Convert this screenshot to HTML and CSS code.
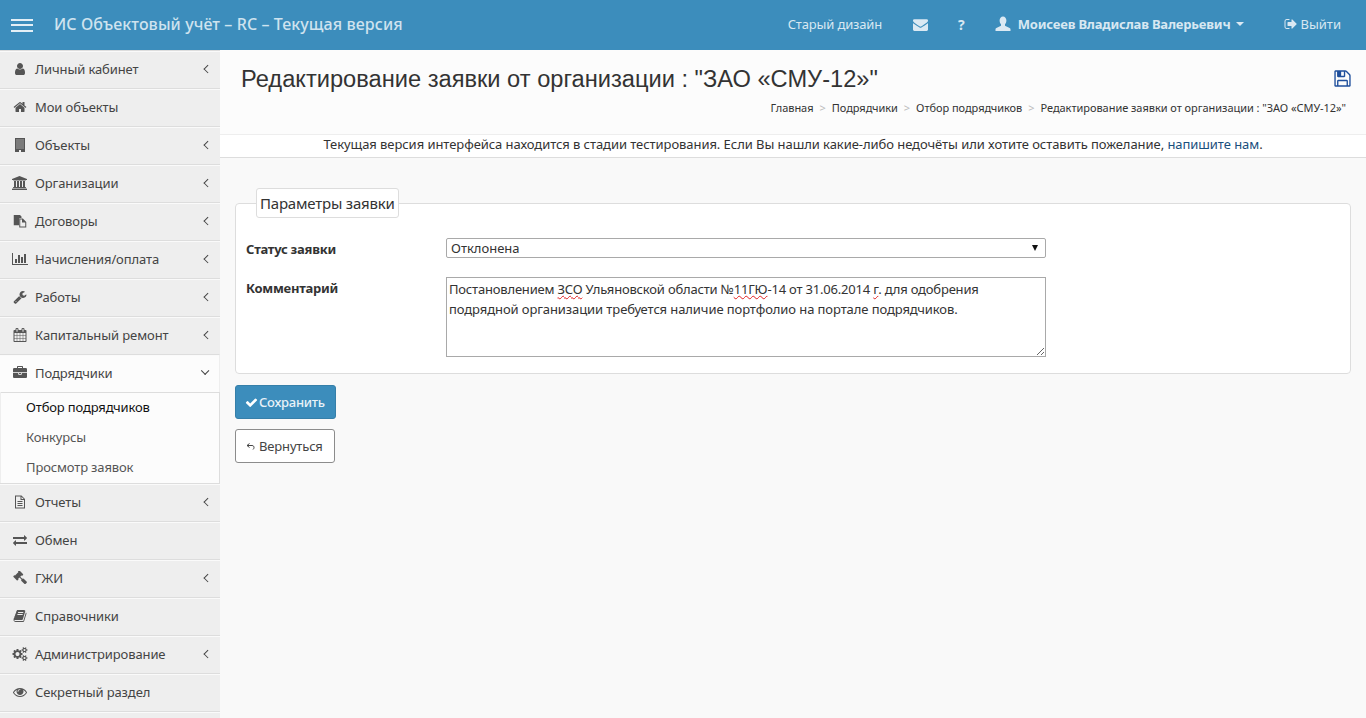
FILE: index.html
```html
<!DOCTYPE html>
<html lang="ru">
  <head>
    <meta charset="UTF-8" />
    <meta name="viewport" content="width=device-width, initial-scale=1.0" />
    <title>Редактирование заявки</title>
    <link rel="stylesheet" href="styles.css">
  </head>
  <body>
    <header class="topbar">
      <div class="burger"><span></span><span></span><span></span></div>
      <div class="brand">ИС Объектовый учёт – RC – Текущая версия</div>
      <nav class="topnav">
        <a class="old-link">Старый дизайн</a>
        <svg class="top-icon mail" viewBox="0 0 1792 1792"><path d="M1792 710v794q0 66-47 113t-113 47h-1472q-66 0-113-47t-47-113v-794q44 49 101 87 362 246 497 345 57 42 92.5 65.5t94.5 48 110 24.5h2q51 0 110-24.5t94.5-48 92.5-65.5q170-123 498-345 57-39 100-87zm0-294q0 79-49 151t-122 123q-376 261-468 325-10 7-42.5 30.5t-54 38-52 32.5-57.5 27-50 9h-2q-23 0-50-9t-57.5-27-52-32.5-54-38-42.5-30.5q-91-64-262-182.5t-205-142.5q-62-42-117-115.5t-55-136.5q0-78 41.5-130t118.5-52h1472q65 0 112.5 47t47.5 113z"/></svg>
        <a class="help">?</a>
        <svg class="top-icon person" viewBox="0 0 16 16"><path d="M8 0.5c2 0 3.4 1.7 3.4 4 0 1.5-.6 3-1.4 3.8v1.4l4.6 2.2c.6.3.9.8.9 1.400v1.700h-15v-1.700c0-.6.3-1.100.9-1.400l4.600-2.200v-1.400c-.8-.8-1.400-2.300-1.400-3.800 0-2.300 1.400-4 3.400-4z"/></svg>
        <a class="user-name">Моисеев Владислав Валерьевич</a>
        <span class="caret"></span>
        <svg class="top-icon logout" viewBox="0 0 1792 1792"><path d="M704 1440q0 4 1 20t.5 26.500-3 23.500-10 19.500-20.500 6.500h-320q-119 0-203.500-84.500t-84.500-203.500v-704q0-119 84.500-203.500t203.500-84.500h320q13 0 22.500 9.500t9.500 22.500q0 4 1 20t.5 26.500-3 23.500-10 19.500-20.500 6.500h-320q-66 0-113 47t-47 113v704q0 66 47 113t113 47h312l11.500 1 11.500 3 8 5.500 7 9 2 13.500zm928-544q0 26-19 45l-544 544q-19 19-45 19t-45-19-19-45v-288h-448q-26 0-45-19t-19-45v-384q0-26 19-45t45-19h448v-288q0-26 19-45t45-19 45 19l544 544q19 19 19 45z"/></svg>
        <a class="logout-link">Выйти</a>
      </nav>
    </header>

    <div class="layout">
      <aside class="sidebar">
        <a class="side-item">
          <svg class="side-icon" viewBox="0 0 1792 1792"><path d="M1536 1399q0 109-62.5 187t-150.5 78h-854q-88 0-150.5-78t-62.5-187q0-85 8.5-160.5t31.5-152 58.5-131 94-89 134.5-34.5q131 128 313 128t313-128q76 0 134.5 34.5t94 89 58.5 131 31.5 152 8.5 160.5zm-256-887q0 159-112.5 271.5t-271.5 112.5-271.5-112.5-112.5-271.5 112.5-271.5 271.5-112.5 271.5 112.5 112.5 271.5z"/></svg>
          <span class="side-label">Личный кабинет</span><span class="chev"></span>
        </a>
        <a class="side-item">
          <svg class="side-icon" viewBox="0 0 1792 1792"><path d="M1472 992v480q0 26-19 45t-45 19h-384v-384h-256v384h-384q-26 0-45-19t-19-45v-480q0-1 .5-3t.5-3l575-474 575 474q1 2 1 6zm223-69l-62 74q-8 9-21 11h-3q-13 0-21-7l-692-577-692 577q-12 8-24 7-13-2-21-11l-62-74q-8-10-7-23.5t11-21.5l719-599q32-26 76-26t76 26l244 204v-195q0-14 9-23t23-9h192q14 0 23 9t9 23v408l219 182q10 8 11 21.5t-7 23.5z"/></svg>
          <span class="side-label">Мои объекты</span>
        </a>
        <a class="side-item">
          <svg class="side-icon" viewBox="0 0 1792 1792"><path fill-rule="evenodd" d="M256 0h1280v1792h-512v-256h-256v256h-512zM448 192v128h128v-128zM704 192v128h128v-128zM960 192v128h128v-128zM1216 192v128h128v-128zM448 448v128h128v-128zM704 448v128h128v-128zM960 448v128h128v-128zM1216 448v128h128v-128zM448 704v128h128v-128zM704 704v128h128v-128zM960 704v128h128v-128zM1216 704v128h128v-128zM448 960v128h128v-128zM704 960v128h128v-128zM960 960v128h128v-128zM1216 960v128h128v-128zM448 1216v128h128v-128zM704 1216v128h128v-128zM960 1216v128h128v-128zM1216 1216v128h128v-128z"/></svg>
          <span class="side-label">Объекты</span><span class="chev"></span>
        </a>
        <a class="side-item">
          <svg class="side-icon" viewBox="0 0 2048 1792"><path d="M960 0l960 384v128h-128q0 26-20.5 45t-48.5 19h-1526q-28 0-48.5-19t-20.5-45h-128v-128zm-704 640h256v768h128v-768h256v768h128v-768h256v768h128v-768h256v768h59q28 0 48.5 19t20.5 45v64h-1664v-64q0-26 20.5-45t48.5-19h59v-768zm1595 960q28 0 48.5 19t20.5 45v128h-1920v-128q0-26 20.5-45t48.5-19h1782z"/></svg>
          <span class="side-label">Организации</span><span class="chev"></span>
        </a>
        <a class="side-item">
          <svg class="side-icon" viewBox="0 0 1792 1792"><path fill-rule="evenodd" d="M96 128h800l192 192v192h-256v928h-736zM800 576h464l432 432v720h-896zM928 704v896h640v-512h-416v-384z"/></svg>
          <span class="side-label">Договоры</span><span class="chev"></span>
        </a>
        <a class="side-item">
          <svg class="side-icon" viewBox="0 0 2048 1792"><path d="M640 896v512h-256v-512h256zm384-512v1024h-256v-1024h256zm1024 1152v128h-2048v-1536h128v1408h1920zm-640-896v768h-256v-768h256zm384-384v1152h-256v-1152h256z"/></svg>
          <span class="side-label">Начисления/оплата</span><span class="chev"></span>
        </a>
        <a class="side-item">
          <svg class="side-icon" viewBox="0 0 1792 1792"><path d="M448 1472q0-26-19-45t-45-19-45 19-19 45 19 45 45 19 45-19 19-45zm644-420l-682 682q-37 37-90 37-52 0-91-37l-106-108q-38-36-38-90 0-53 38-91l681-681q39 98 114.5 173.5t173.5 114.5zm634-435q0 39-23 106-47 134-164.5 217.5t-258.5 83.5q-185 0-316.5-131.5t-131.5-316.5 131.5-316.5 316.5-131.5q58 0 121.5 16.5t107.5 46.5q16 11 16 28t-16 28l-293 169v224l193 107q5-3 79-48.5t135.5-81 70.5-35.5q15 0 23.5 10t8.5 25z"/></svg>
          <span class="side-label">Работы</span><span class="chev"></span>
        </a>
        <a class="side-item">
          <svg class="side-icon" viewBox="0 0 1792 1792"><path d="M192 1664h288v-288h-288v288zm352 0h320v-288h-320v288zm-352-352h288v-320h-288v320zm352 0h320v-320h-320v320zm-352-384h288v-288h-288v288zm736 736h320v-288h-320v288zm-384-736h320v-288h-320v288zm768 736h288v-288h-288v288zm-384-352h320v-320h-320v320zm-352-864v-288q0-13-9.5-22.5t-22.5-9.5h-64q-13 0-22.5 9.5t-9.5 22.5v288q0 13 9.5 22.5t22.5 9.5h64q13 0 22.5-9.5t9.5-22.5zm736 864h288v-320h-288v320zm-384-384h320v-288h-320v288zm384 0h288v-288h-288v288zm32-480v-288q0-13-9.5-22.5t-22.5-9.5h-64q-13 0-22.5 9.5t-9.5 22.5v288q0 13 9.5 22.5t22.5 9.5h64q13 0 22.5-9.5t9.5-22.5zm384-64v1280q0 52-38 90t-90 38h-1408q-52 0-90-38t-38-90v-1280q0-52 38-90t90-38h128v-96q0-66 47-113t113-47h64q66 0 113 47t47 113v96h384v-96q0-66 47-113t113-47h64q66 0 113 47t47 113v96h128q52 0 90 38t38 90z"/></svg>
          <span class="side-label">Капитальный ремонт</span><span class="chev"></span>
        </a>
        <a class="side-item open">
          <svg class="side-icon" viewBox="0 0 1792 1792"><path d="M640 256h512v-128h-512v128zm1152 640v480q0 66-47 113t-113 47h-1472q-66 0-113-47t-47-113v-480h672v160q0 26 19 45t45 19h320q26 0 45-19t19-45v-160h672zm-768 0v128h-256v-128h256zm768-480v384h-1792v-384q0-66 47-113t113-47h352v-160q0-40 28-68t68-28h576q40 0 68 28t28 68v160h352q66 0 113 47t47 113z"/></svg>
          <span class="side-label">Подрядчики</span><span class="chev down"></span>
        </a>
        <div class="submenu">
          <a class="sub-item current">Отбор подрядчиков</a>
          <a class="sub-item">Конкурсы</a>
          <a class="sub-item">Просмотр заявок</a>
        </div>
        <a class="side-item">
          <svg class="side-icon" viewBox="0 0 1792 1792"><path fill-rule="evenodd" d="M256 64h832l448 448v1216h-1280zM384 192v1408h1024v-960h-448v-448zM1088 224v288h288zM576 768h640v128h-640zM576 1024h640v128h-640zM576 1280h640v128h-640z"/></svg>
          <span class="side-label">Отчеты</span><span class="chev"></span>
        </a>
        <a class="side-item">
          <svg class="side-icon" viewBox="0 0 1792 1792"><path d="M1792 1184v192q0 13-9.5 22.5t-22.5 9.5h-1376v192q0 13-9.5 22.5t-22.5 9.5q-12 0-24-10l-319-320q-9-9-9-22 0-14 9-23l320-320q9-9 23-9 13 0 22.5 9.5t9.5 22.5v192h1376q13 0 22.5 9.5t9.5 22.5zm0-544q0 14-9 23l-320 320q-9 9-23 9-13 0-22.5-9.5t-9.5-22.5v-192h-1376q-13 0-22.5-9.5t-9.5-22.5v-192q0-13 9.5-22.5t22.5-9.5h1376v-192q0-14 9-23t23-9q12 0 24 10l319 319q9 9 9 23z"/></svg>
          <span class="side-label">Обмен</span>
        </a>
        <a class="side-item">
          <svg class="side-icon" viewBox="0 0 1792 1792"><path d="M1771 1440q0 53-37 90l-107 108q-39 37-91 37-53 0-90-37l-363-364q-38-36-38-90 0-53 43-96l-256-256-126 126q-14 14-34 14t-34-14q2 2 12.5 12t12.5 13 10 11.5 10 13.5 6 13.5 5.5 16.5 1.5 18q0 38-28 68-3 3-16.5 18t-19 20.5-18.5 16.5-22 15.5-22 9-26 4.5q-40 0-68-28l-408-408q-28-28-28-68 0-13 4.5-26t9-22 15.5-22 16.5-18.5 20.5-19 18-16.5q30-28 68-28 10 0 18 1.5t16.5 5.5 13.5 6 13.5 10 11.5 10 13 12.5 12 12.5q-14-14-14-34t14-34l348-348q14-14 34-14t34 14q-2-2-12.5-12t-12.5-13-10-11.5-10-13.5-6-13.5-5.5-16.5-1.5-18q0-38 28-68 3-3 16.5-18t19-20.5 18.5-16.5 22-15.5 22-9 26-4.5q40 0 68 28l408 408q28 28 28 68 0 13-4.5 26t-9 22-15.5 22-16.5 18.5-20.5 19-18 16.5q-30 28-68 28-10 0-18-1.5t-16.5-5.5-13.5-6-13.5-10-11.5-10-13-12.5-12-12.5q14 14 14 34t-14 34l-126 126 256 256q43-43 96-43 52 0 91 37l363 363q37 39 37 91z"/></svg>
          <span class="side-label">ГЖИ</span><span class="chev"></span>
        </a>
        <a class="side-item">
          <svg class="side-icon" viewBox="0 0 1792 1792"><path d="M1703 478q40 57 18 129l-275 906q-19 64-76.5 107.5t-122.5 43.5h-923q-77 0-148.5-53.5t-99.5-131.5q-24-67-2-127 0-4 3-27t4-37q1-8-3-21.5t-3-19.5q2-11 8-21t16.5-23.5 16.5-23.5q23-38 45-91.5t30-91.5q3-10 .5-30t-.5-28q3-11 17-28t17-23q21-36 42-92t25-90q1-9-2.5-32t.5-28q4-13 22-30.5t22-22.5q19-26 42.5-84.5t27.5-96.5q1-8-3-25.5t-2-26.5q2-8 9-18t18-23 17-21q8-12 16.5-30.5t15-35 16-36 19.5-32 26.5-23.5 36-11.5 47.5 5.5l-1 3q38-9 51-9h761q74 0 114 56t18 130l-274 906q-36 119-71.5 153.5t-128.5 34.5h-869q-27 0-38 15-11 16-1 43 24 70 144 70h923q29 0 56-15.5t35-41.5l300-987q7-22 5-57 38 15 59 43zm-1064 2q-4 13 2 22.5t20 9.5h608q13 0 25.5-9.5t16.5-22.5l21-64q4-13-2-22.5t-20-9.5h-608q-13 0-25.5 9.5t-16.5 22.5zm-83 256q-4 13 2 22.5t20 9.5h608q13 0 25.5-9.5t16.5-22.5l21-64q4-13-2-22.5t-20-9.5h-608q-13 0-25.5 9.5t-16.5 22.5z"/></svg>
          <span class="side-label">Справочники</span>
        </a>
        <a class="side-item">
          <svg class="side-icon" viewBox="0 0 1920 1792"><path d="M896 896q0-106-75-181t-181-75-181 75-75 181 75 181 181 75 181-75 75-181zm768 512q0-52-38-90t-90-38-90 38-38 90q0 53 37.5 90.5t90.5 37.5 90.5-37.5 37.5-90.5zm0-1024q0-52-38-90t-90-38-90 38-38 90q0 53 37.5 90.5t90.5 37.5 90.5-37.5 37.5-90.5zm-384 421v185q0 10-7 19.5t-16 10.5l-155 24q-11 35-32 76 34 48 90 115 7 11 7 20 0 12-7 19-23 30-82.5 89.5t-78.5 59.5q-11 0-21-7l-115-90q-37 19-77 31-11 108-23 155-7 24-30 24h-186q-11 0-20-7.5t-10-17.5l-23-153q-34-10-75-31l-118 89q-7 7-20 7-11 0-21-8-144-133-144-160 0-9 7-19 10-14 41-53t47-61q-23-44-35-82l-152-24q-10-1-17-9.5t-7-19.5v-185q0-10 7-19.5t16-10.5l155-24q11-35 32-76-34-48-90-115-7-11-7-20 0-12 7-20 22-30 82-89t79-59q11 0 21 7l115 90q34-18 77-32 11-108 23-154 7-24 30-24h186q11 0 20 7.5t10 17.5l23 153q34 10 75 31l118-89q8-7 20-7 11 0 21 8 144 133 144 160 0 8-7 19-12 16-42 54t-45 60q23 48 34 82l152 23q10 2 17 10.5t7 19.5zm640 533v140q0 16-149 31-12 27-30 52 51 113 51 138 0 4-4 7-122 71-124 71-8 0-46-47t-52-68q-20 2-30 2t-30-2q-14 21-52 68t-46 47q-2 0-124-71-4-3-4-7 0-25 51-138-18-25-30-52-149-15-149-31v-140q0-16 149-31 13-29 30-52-51-113-51-138 0-4 4-7 4-2 35-20t59-34 30-16q8 0 46 46.5t52 67.5q20-2 30-2t30 2q51-71 92-112l6-2q4 0 124 70 4 3 4 7 0 25-51 138 17 23 30 52 149 15 149 31zm0-1024v140q0 16-149 31-12 27-30 52 51 113 51 138 0 4-4 7-122 71-124 71-8 0-46-47t-52-68q-20 2-30 2t-30-2q-14 21-52 68t-46 47q-2 0-124-71-4-3-4-7 0-25 51-138-18-25-30-52-149-15-149-31v-140q0-16 149-31 13-29 30-52-51-113-51-138 0-4 4-7 4-2 35-20t59-34 30-16q8 0 46 46.5t52 67.5q20-2 30-2t30 2q51-71 92-112l6-2q4 0 124 70 4 3 4 7 0 25-51 138 17 23 30 52 149 15 149 31z"/></svg>
          <span class="side-label">Администрирование</span><span class="chev"></span>
        </a>
        <a class="side-item">
          <svg class="side-icon" viewBox="0 0 1792 1792"><path d="M1664 960q-152-236-381-353 61 104 61 225 0 185-131.5 316.5t-316.5 131.5-316.5-131.5-131.5-316.5q0-121 61-225-229 117-381 353 133 205 333.5 326.5t434.5 121.5 434.5-121.5 333.5-326.5zm-720-384q0-20-14-34t-34-14q-125 0-214.5 89.5t-89.5 214.5q0 20 14 34t34 14 34-14 14-34q0-86 61-147t147-61q20 0 34-14t14-34zm848 384q0 34-20 69-140 230-376.5 368.5t-499.5 138.5-499.5-139-376.5-368q-20-35-20-69t20-69q140-229 376.5-368t499.5-139 499.5 139 376.5 368q20 35 20 69z"/></svg>
          <span class="side-label">Секретный раздел</span>
        </a>
        <a class="side-item"></a>
      </aside>

      <main class="content">
        <section class="page-head">
          <div class="title-row">
            <h1>Редактирование заявки от организации : "ЗАО «СМУ-12»"</h1>
            <svg class="save-icon" viewBox="0 0 1792 1792"><path d="M512 1536h768v-384h-768v384zm896 0h128v-896q0-14-10-38.5t-20-34.5l-281-281q-10-10-34-20t-39-10v416q0 40-28 68t-68 28h-576q-40 0-68-28t-28-68v-416h-128v1280h128v-416q0-40 28-68t68-28h832q40 0 68 28t28 68v416zm-384-928v-320q0-13-9.5-22.5t-22.5-9.5h-192q-13 0-22.5 9.5t-9.5 22.5v320q0 13 9.5 22.5t22.5 9.5h192q13 0 22.5-9.5t9.5-22.5zm640 32v928q0 40-28 68t-68 28h-1344q-40 0-68-28t-28-68v-1344q0-40 28-68t68-28h928q40 0 88 20t76 48l280 280q28 28 48 76t20 88z"/></svg>
          </div>
          <ol class="breadcrumb">
            <li>Главная</li>
            <li>Подрядчики</li>
            <li>Отбор подрядчиков</li>
            <li>Редактирование заявки от организации : "ЗАО «СМУ-12»"</li>
          </ol>
        </section>

        <div class="notice">Текущая версия интерфейса находится в стадии тестирования. Если Вы нашли какие-либо недочёты или хотите оставить пожелание, <a>напишите нам</a>.</div>

        <form class="request-form">
          <fieldset class="params">
            <legend>Параметры заявки</legend>
            <div class="form-row status-row">
              <label>Статус заявки</label>
              <div class="select-wrap">
                <select class="status-select">
                  <option>Отклонена</option>
                </select>
              </div>
            </div>
            <div class="form-row">
              <label>Комментарий</label>
              <div class="comment-box">
                <div>Постановлением <span class="typo">ЗСО</span> Ульяновской области №<span class="typo">11ГЮ</span>-14 от 31.06.2014 <span class="typo">г</span>. для одобрения</div>
                <div class="comment-second">подрядной организации требуется наличие портфолио на портале подрядчиков.</div>
              </div>
            </div>
          </fieldset>
          <button type="button" class="btn btn-save">
            <svg class="btn-icon" viewBox="0 0 1792 1792"><path d="M1671 566q0 40-28 68l-724 724-136 136q-28 28-68 28t-68-28l-136-136-362-362q-28-28-28-68t28-68l136-136q28-28 68-28t68 28l294 295 656-657q28-28 68-28t68 28l136 136q28 28 28 68z"/></svg>
            Сохранить
          </button>
          <button type="button" class="btn btn-back">
            <svg class="back-icon" viewBox="0 0 9 7"><path d="M3.5 .5L1 2.5l2.5 2M1 2.5h5c1.500 0 2 1 2 2s-.5 1.500-1 2"/></svg>
            Вернуться
          </button>
        </form>
      </main>
    </div>
  </body>
</html>
```

FILE: styles.css
```css
* {
  box-sizing: border-box;
}
html,
body {
  height: 100%;
}
body {
  margin: 0;
  overflow: hidden;
  font-family: "Noto Sans", Arial, sans-serif;
  font-size: 13px;
  color: #333333;
  background-color: #f9f9f9;
}
.topbar {
  display: flex;
  align-items: center;
  height: 50px;
  padding-bottom: 2px;
  background-color: #3c8dbc;
  color: #d8e8f2;
}
.burger {
  display: flex;
  flex-direction: column;
  justify-content: space-between;
  width: 22px;
  height: 13px;
  margin-left: 11px;
  margin-top: 2px;
}
.burger span {
  display: block;
  height: 2px;
  background-color: #e3eff6;
}
.brand {
  margin-left: 21px;
  font-size: 16px;
  font-weight: 500;
  letter-spacing: 0.1px;
  color: #cfe3ef;
}
.topnav {
  display: flex;
  align-items: center;
  margin-left: auto;
  padding-right: 25px;
  font-size: 13px;
}
.old-link {
  letter-spacing: -0.15px;
}
.top-icon {
  fill: #dbe9f3;
}
.mail {
  width: 15px;
  height: 15px;
  margin-left: 31px;
}
.help {
  margin-left: 30px;
  margin-right: 30px;
  font-size: 14px;
  font-weight: 700;
}
.person {
  width: 16px;
  height: 16px;
  margin-right: 7px;
}
.user-name {
  font-weight: 700;
  letter-spacing: -0.18px;
}
.caret {
  width: 0;
  height: 0;
  margin-left: 6px;
  border-top: 4px solid #dbe9f3;
  border-left: 4px solid transparent;
  border-right: 4px solid transparent;
}
.logout {
  width: 14px;
  height: 14px;
  margin-left: 40px;
  margin-right: 2px;
}
.layout {
  display: flex;
  height: calc(100% - 50px);
}
.sidebar {
  flex: none;
  width: 220px;
  height: 100%;
  overflow: hidden;
  background-color: #fcfcfc;
}
.side-item {
  display: flex;
  align-items: center;
  height: 38px;
  padding: 0 10px 2px 12px;
  background-color: #eeeeee;
  border-top: 1px solid #dddddd;
  box-shadow: inset 0 1px 0 #fafafa;
  color: #444444;
}
.side-item.open {
  background-color: #fcfcfc;
  border-right: 1px solid #eeeeee;
}
.side-icon {
  flex: none;
  width: 16px;
  height: 14px;
  margin-right: 7px;
  fill: #555555;
}
.side-label {
  flex: 1;
  letter-spacing: -0.1px;
}
.chev {
  width: 5.5px;
  height: 5.5px;
  border-left: 1px solid #444444;
  border-bottom: 1px solid #444444;
  transform: rotate(45deg);
}
.chev.down {
  margin-right: 2px;
  margin-top: -3px;
  transform: rotate(-45deg);
}
.submenu {
  display: flex;
  flex-direction: column;
  height: 91px;
  border-left: 1px solid #eeeeee;
  border-right: 1px solid #dddddd;
  box-shadow: inset 0 1px 0 #dddddd;
}
.sub-item {
  display: flex;
  align-items: center;
  height: 30px;
  padding-left: 25px;
  letter-spacing: -0.15px;
  color: #555555;
}
.sub-item.current {
  color: #111111;
}
.content {
  flex: 1;
  min-width: 0;
}
.page-head {
  height: 84px;
  padding: 15px 14px 0 21px;
  background-color: #fcfcfc;
}
.title-row {
  display: flex;
  justify-content: space-between;
}
h1 {
  margin: 0;
  font-family: "Liberation Sans", Arial, sans-serif;
  font-size: 23.65px;
  font-weight: 400;
  line-height: 28px;
  color: #333333;
}
.save-icon {
  width: 19px;
  height: 19px;
  margin-top: 4px;
  fill: #1f4f9c;
}
.breadcrumb {
  display: flex;
  justify-content: flex-end;
  margin: 7px 6px 0 0;
  padding: 0;
  list-style: none;
  font-size: 11px;
  letter-spacing: -0.04px;
  color: #333333;
}
.breadcrumb li + li::before {
  content: ">";
  margin: 0 6px;
  color: #bbbbbb;
}
.notice {
  height: 24px;
  background-color: #ffffff;
  border-top: 1px solid #eeeeee;
  border-bottom: 1px solid #dddddd;
  line-height: 18px;
  letter-spacing: -0.06px;
  text-align: center;
  color: #333333;
}
.notice a {
  color: #1a4f7d;
}
.request-form {
  display: flex;
  flex-direction: column;
  align-items: flex-start;
  padding: 30px 15px 0;
}
.params {
  width: 100%;
  height: 186px;
  margin: 0;
  padding: 20px 10px 0;
  background-color: #ffffff;
  border: 1px solid #dddddd;
  border-radius: 4px;
}
.params legend {
  margin-left: 10px;
  padding: 0 3px;
  height: 30px;
  background-color: #ffffff;
  border: 1px solid #dddddd;
  border-radius: 3px;
  font-size: 15px;
  letter-spacing: -0.2px;
  line-height: 28px;
}
.form-row {
  display: grid;
  grid-template-columns: 200px 600px;
}
.status-row {
  margin-bottom: 19px;
}
.form-row label {
  padding-top: 2px;
  font-weight: 700;
  letter-spacing: -0.25px;
}
.select-wrap {
  position: relative;
  height: 20px;
}
.select-wrap::after {
  content: "";
  position: absolute;
  top: 7px;
  right: 8px;
  border-top: 6px solid #111111;
  border-left: 3px solid transparent;
  border-right: 3px solid transparent;
}
.status-select {
  display: block;
  width: 600px;
  height: 20px;
  padding: 0 4px;
  appearance: none;
  background-color: #ffffff;
  border: 1px solid #a9a9a9;
  border-radius: 2px;
  font-family: inherit;
  font-size: 13px;
  color: #333333;
}
.comment-box {
  width: 600px;
  height: 80px;
  padding: 1px 2px;
  overflow: auto;
  resize: both;
  background-color: #ffffff;
  border: 1px solid #a9a9a9;
  line-height: 20px;
  letter-spacing: -0.19px;
}
.comment-second {
  letter-spacing: -0.09px;
}
.typo {
  text-decoration: underline wavy #e02020 1px;
}
.btn {
  display: flex;
  align-items: center;
  font-family: inherit;
  font-size: 13px;
  letter-spacing: -0.15px;
  border-radius: 3px;
}
.btn-save {
  width: 101px;
  height: 34px;
  margin-top: 11px;
  padding: 0 9px;
  background-color: #3c8dbc;
  border: 1px solid #367fa9;
  color: #e8f2f8;
  font-weight: 500;
  letter-spacing: -0.25px;
}
.btn-icon {
  width: 13px;
  height: 13px;
  margin-right: 1px;
  fill: #ffffff;
}
.btn-back {
  width: 100px;
  height: 34px;
  margin-top: 10px;
  padding: 0 10px;
  background-color: #ffffff;
  border: 1px solid #8c8c8c;
  color: #444444;
}
.back-icon {
  width: 9px;
  height: 7px;
  margin-right: 4px;
  fill: none;
  stroke: #444444;
  stroke-width: 1;
}
```
